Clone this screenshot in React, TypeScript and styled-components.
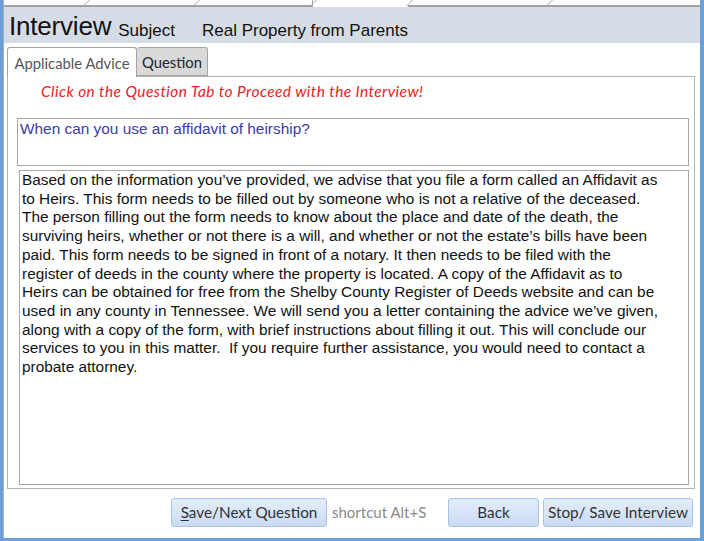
import React from "react";
import styled, { createGlobalStyle } from "styled-components";

// ============== Global =============
const GlobalStyle = createGlobalStyle`
  html, body {
    margin: 0;
    padding: 0;
    background: #ffffff;
  }
  * {
    box-sizing: border-box;
  }
`;

// ============== Style Component =============
const Window = styled.div`
  width: 704px;
  height: 541px;
  display: flex;
  flex-direction: column;
  border-left: 3px solid #6c9fd6;
  border-right: 4px solid #6c9fd6;
  border-bottom: 3px solid #6c9fd6;
  background: #ffffff;
  overflow: hidden;
`;

const Inner = styled.div`
  flex: 1;
  display: flex;
  flex-direction: column;
  border-left: 1px solid #a9b1bb;
`;

const TopStrip = styled.div`
  height: 7px;
  display: flex;
  background: #ffffff;
`;

const StripTab = styled.div<{ $w: number; $active?: boolean }>`
  position: relative;
  width: ${(p) => p.$w}px;
  height: 7px;
  border-bottom: ${(p) => (p.$active ? "none" : "2px solid #a3a3a3")};
  border-left: ${(p) => (p.$active ? "1px solid #a3a3a3" : "none")};
  &::after {
    content: "";
    position: absolute;
    right: -2px;
    top: 0;
    width: 1px;
    height: 6px;
    background: #a3a3a3;
    transform: skewX(-45deg);
  }
`;

const StripRest = styled.div`
  flex: 1;
  border-bottom: 2px solid #a3a3a3;
`;

const Header = styled.header`
  height: 36px;
  background: #d6dce5;
  display: flex;
  align-items: baseline;
  padding: 2px 0 0 5px;
  font-family: "Liberation Sans", Arial, sans-serif;
  color: #111;
`;

const Title = styled.span`
  font-size: 26px;
  line-height: 34px;
  letter-spacing: -0.2px;
`;

const Label = styled.span<{ $gap: number }>`
  font-size: 17px;
  margin-left: ${(p) => p.$gap}px;
  position: relative;
  top: 1px;
`;

const Body = styled.div`
  flex: 1;
  display: flex;
  flex-direction: column;
  padding: 4px 4px 0 3px;
`;

const TabList = styled.div`
  display: flex;
  align-items: flex-end;
  height: 29px;
  font-family: Lato, "Open Sans", sans-serif;
  font-size: 14.8px;
`;

const Tab = styled.div<{ $active?: boolean; $w: number }>`
  width: ${(p) => p.$w}px;
  height: ${(p) => (p.$active ? 30 : 29)}px;
  margin-bottom: ${(p) => (p.$active ? -1 : 0)}px;
  display: flex;
  align-items: center;
  justify-content: center;
  border: 1px solid #a3a3a3;
  border-bottom: ${(p) => (p.$active ? "none" : "1px solid #a3a3a3")};
  border-left: ${(p) => (p.$active ? "1px solid #a3a3a3" : "none")};
  border-radius: 3px 3px 0 0;
  background: ${(p) => (p.$active ? "#ffffff" : "#d9d9d9")};
  color: ${(p) => (p.$active ? "#555555" : "#222222")};
  position: relative;
  z-index: 1;
`;

const Panel = styled.div`
  width: 688px;
  height: 413px;
  border: 1px solid #b4b4b4;
  display: flex;
  flex-direction: column;
  padding: 4px 5px 3px 9px;
`;

const Note = styled.div`
  font-family: Lato, "Open Sans", sans-serif;
  font-style: italic;
  font-size: 15.5px;
  letter-spacing: 0.4px;
  color: #ec1c24;
  padding-left: 24px;
  height: 21px;
  line-height: 21px;
  margin-bottom: 16px;
`;

const Field = styled.div<{ $h: number; $ml: number }>`
  height: ${(p) => p.$h}px;
  margin-left: ${(p) => p.$ml}px;
  border: 1px solid #a6a6a6;
  padding: 1px 2px;
  font-family: "Liberation Sans", Arial, sans-serif;
  font-size: 15.4px;
  line-height: 18.7px;
`;

const QuestionField = styled(Field)`
  color: #3c3ca8;
  margin-bottom: 4px;
`;

const AnswerField = styled(Field)`
  color: #111111;
  padding-top: 0px;
`;

const Line = styled.div`
  white-space: nowrap;
`;

const Footer = styled.div`
  flex: 1;
  display: flex;
  align-items: center;
  justify-content: flex-end;
  padding: 0 3px 3px 0;
  font-family: Lato, "Open Sans", sans-serif;
`;

const Button = styled.button<{ $w: number; $ml?: number }>`
  width: ${(p) => p.$w}px;
  height: 29px;
  margin-left: ${(p) => p.$ml ?? 0}px;
  padding: 0;
  border: 1px solid #a8c3e6;
  border-radius: 3px;
  background: linear-gradient(#e4eefa, #c8dbf3);
  color: #333333;
  font-family: Lato, "Open Sans", sans-serif;
  font-size: 15.3px;
  cursor: pointer;
  u {
    text-decoration: underline;
    text-underline-offset: 2px;
  }
`;

const Hint = styled.span`
  color: #8a8a8a;
  font-size: 15px;
  margin-left: 5px;
  width: 116px;
`;

// ============== Data ================

const answerLines = [
  "Based on the information you\u2019ve provided, we advise that you file a form called an Affidavit as",
  "to Heirs. This form needs to be filled out by someone who is not a relative of the deceased.",
  "The person filling out the form needs to know about the place and date of the death, the",
  "surviving heirs, whether or not there is a will, and whether or not the estate\u2019s bills have been",
  "paid. This form needs to be signed in front of a notary. It then needs to be filed with the",
  "register of deeds in the county where the property is located. A copy of the Affidavit as to",
  "Heirs can be obtained for free from the Shelby County Register of Deeds website and can be",
  "used in any county in Tennessee. We will send you a letter containing the advice we\u2019ve given,",
  "along with a copy of the form, with brief instructions about filling it out. This will conclude our",
  "services to you in this matter.\u00a0 If you require further assistance, you would need to contact a",
  "probate attorney.",
];

// ========================================

export default function App() {
  return (
    <>
      <GlobalStyle />
      <Window>
        <Inner>
          <TopStrip>
            <StripTab $w={81} />
            <StripTab $w={110} />
            <StripTab $w={117} />
            <StripTab $w={96} $active />
            <StripTab $w={140} />
            <StripRest />
          </TopStrip>
          <Header>
            <Title>Interview</Title>
            <Label $gap={7}>Subject</Label>
            <Label $gap={27}>Real Property from Parents</Label>
          </Header>
          <Body>
            <TabList>
              <Tab $active $w={130}>Applicable Advice</Tab>
              <Tab $w={71}>Question</Tab>
            </TabList>
            <Panel>
              <Note>Click on the Question Tab to Proceed with the Interview!</Note>
              <QuestionField $h={48} $ml={0}>
                When can you use an affidavit of heirship?
              </QuestionField>
              <AnswerField $h={315} $ml={2}>
                {answerLines.map((l, i) => (
                  <Line key={i}>{l}</Line>
                ))}
              </AnswerField>
            </Panel>
            <Footer>
              <Button $w={156} $ml={0}>
                <u>S</u>ave/Next Question
              </Button>
              <Hint>shortcut Alt+S</Hint>
              <Button $w={91}>Back</Button>
              <Button $w={150} $ml={4}>
                Stop/ Save Interview
              </Button>
            </Footer>
          </Body>
        </Inner>
      </Window>
    </>
  );
}
